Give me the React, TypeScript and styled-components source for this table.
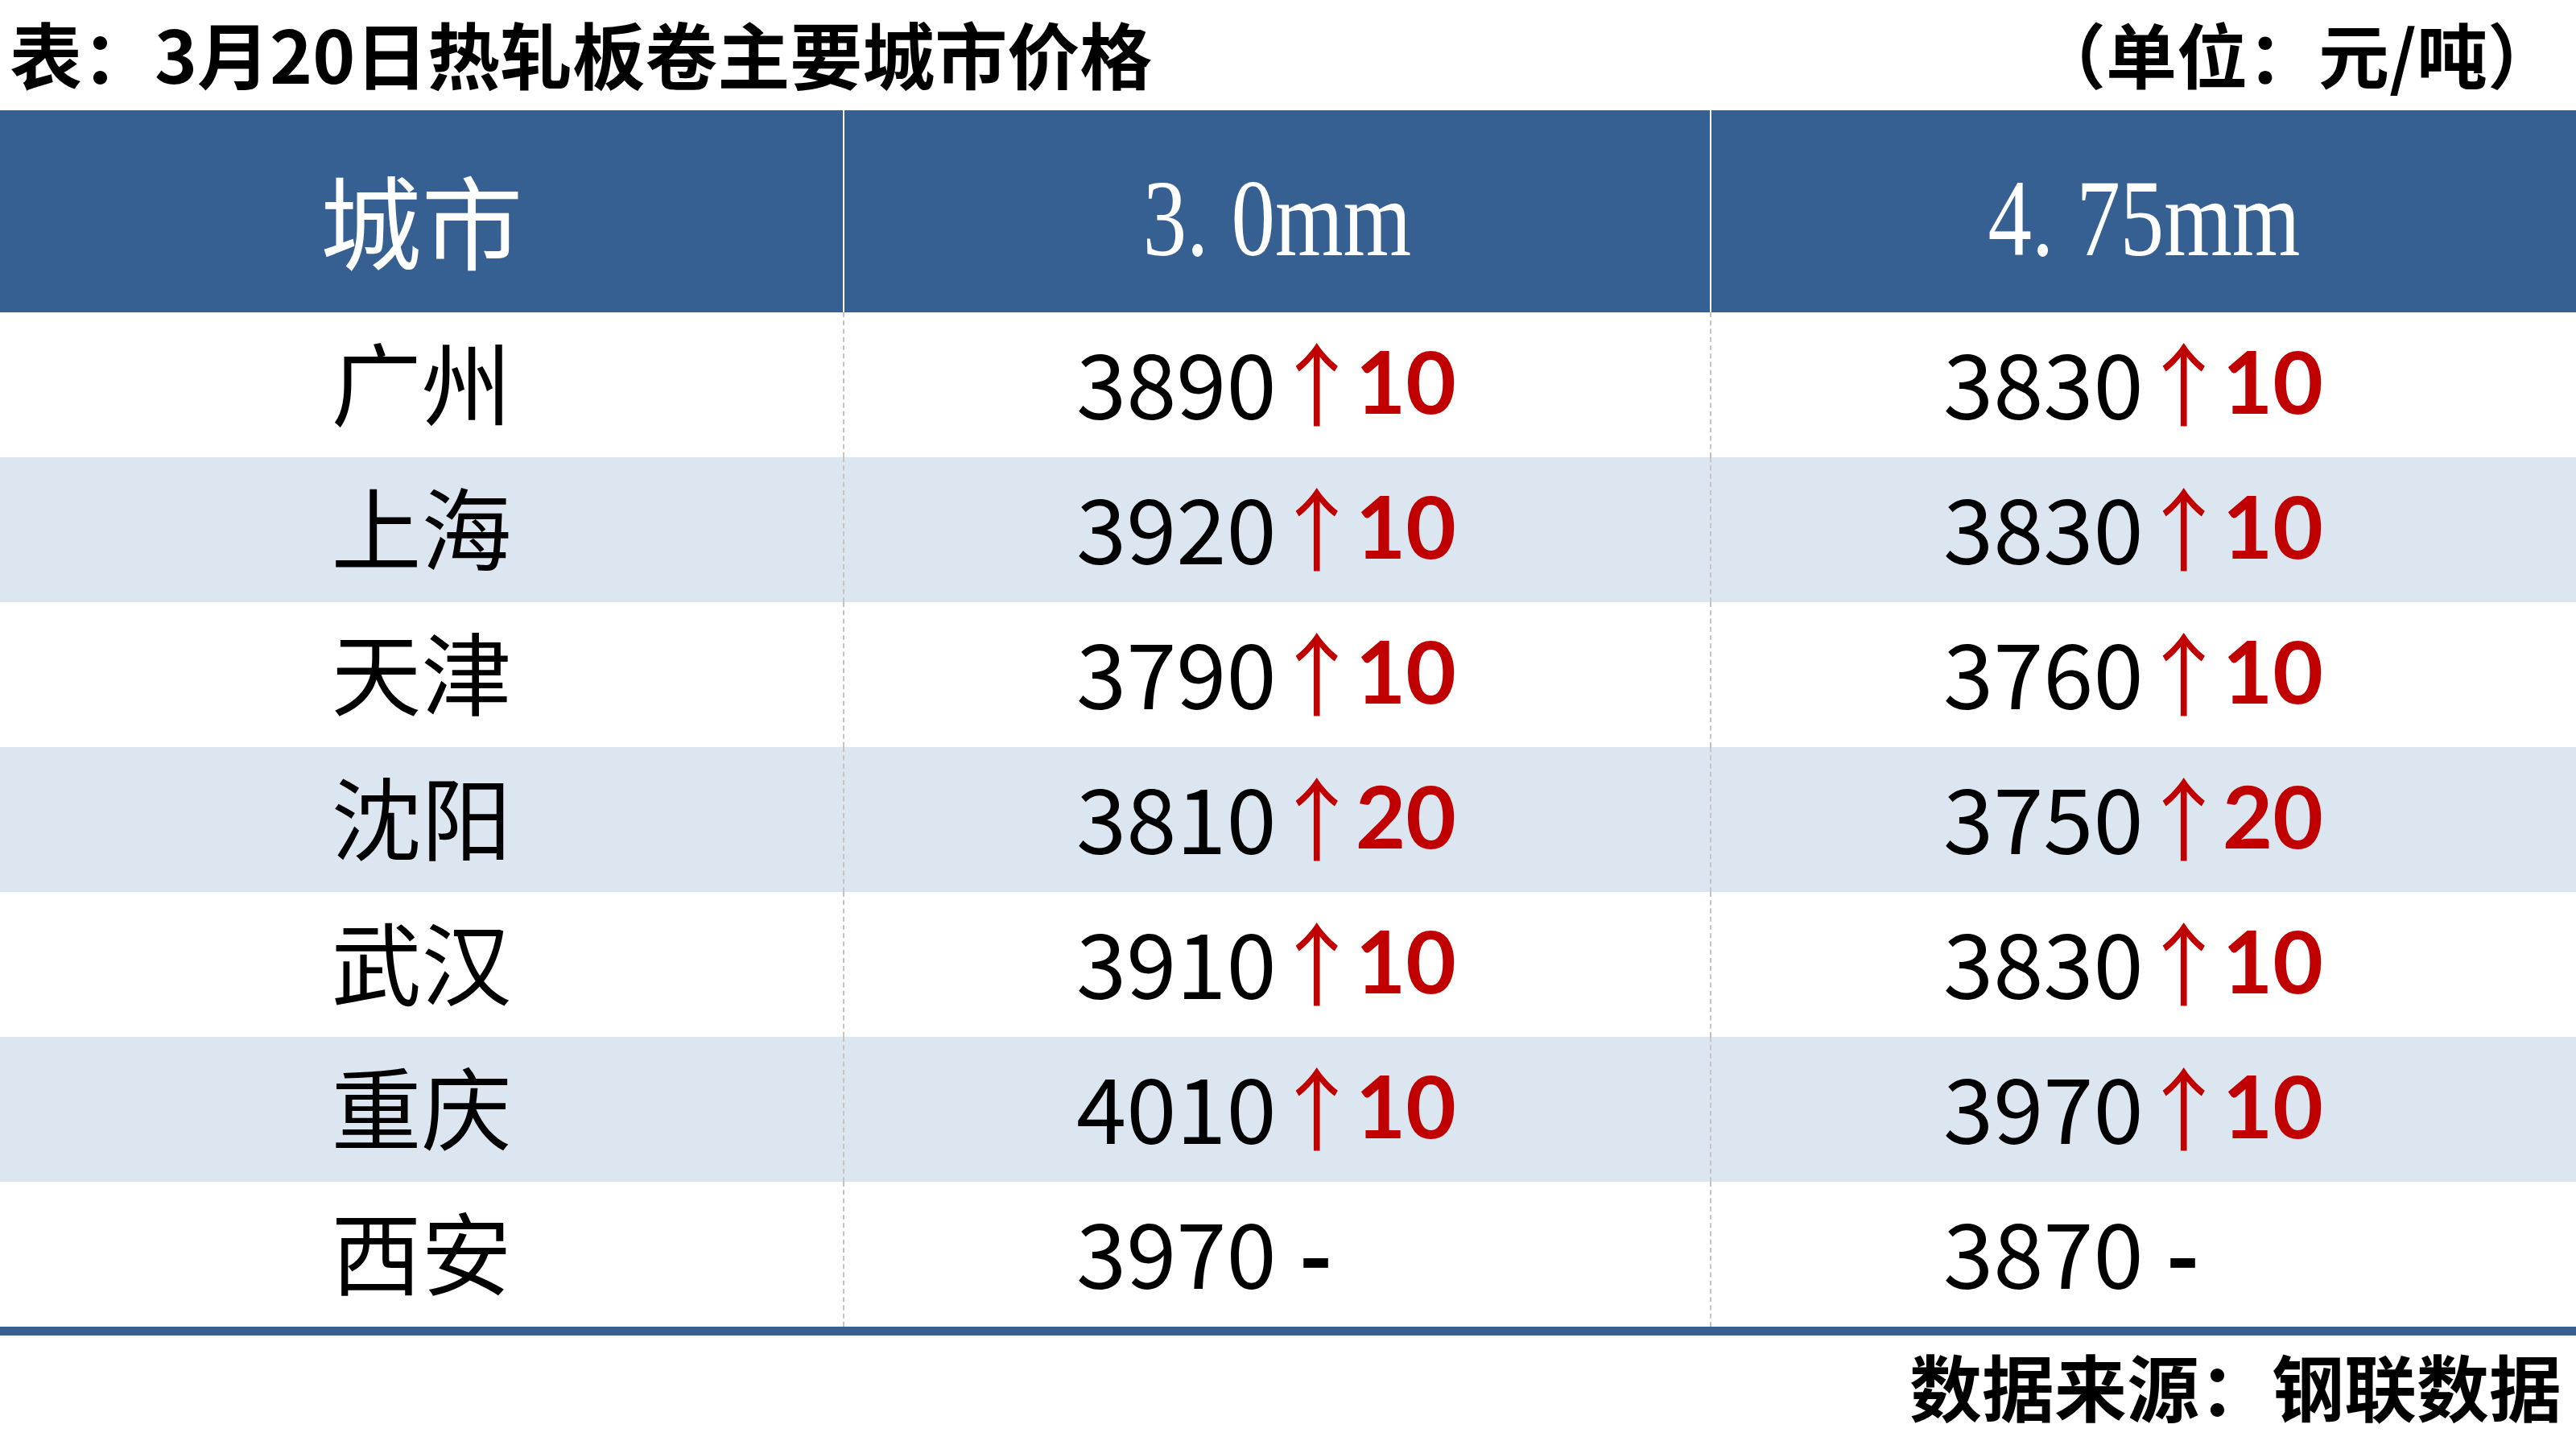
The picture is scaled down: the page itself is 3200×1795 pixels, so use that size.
import styled, { createGlobalStyle } from 'styled-components'

const GlobalStyle = createGlobalStyle`
  html, body {
    margin: 0;
    padding: 0;
    background: #ffffff;
  }
  body {
    font-family: "Noto Sans CJK SC", "Noto Sans", sans-serif;
  }
`

const Page = styled.div`
  width: 3200px;
  height: 1795px;
  display: flex;
  flex-direction: column;
  background: #ffffff;
  overflow: hidden;
`

const TitleBar = styled.div`
  height: 137px;
  box-sizing: border-box;
  padding: 0 22px 8px 12px;
  display: flex;
  justify-content: space-between;
  align-items: center;
  font-weight: 700;
  line-height: 1;
  color: #000000;
`

const Title = styled.span<{ $size: number }>`
  font-size: ${({ $size }) => $size}px;
`

const Table = styled.div`
  display: grid;
  grid-template-columns: 1047px 1077px 1fr;
  border-bottom: 11px solid #376092;
`

const HeadCell = styled.div<{ $first?: boolean }>`
  height: 251px;
  box-sizing: border-box;
  padding-top: 16px;
  background: #376092;
  color: #ffffff;
  display: flex;
  align-items: center;
  justify-content: center;
  border-left: ${({ $first }) => ($first ? 'none' : '2px solid #ffffff')};
  overflow: hidden;
`

const HeadCity = styled.span`
  font-size: 126px;
  font-weight: 400;
  line-height: 1;
`

const HeadSize = styled.span`
  display: inline-block;
  font-family: "Liberation Serif", "DejaVu Serif", serif;
  font-size: 136px;
  line-height: 1;
  transform: scaleX(0.8);
`

const Dot = styled.span`
  padding-right: 0.26em;
`

const Cell = styled.div<{ $shade: boolean; $first?: boolean }>`
  height: 180px;
  box-sizing: border-box;
  padding-bottom: 12px;
  background: ${({ $shade }) => ($shade ? '#dce6f1' : '#ffffff')};
  display: flex;
  align-items: center;
  justify-content: ${({ $first }) => ($first ? 'center' : 'flex-start')};
  padding-left: ${({ $first }) => ($first ? '0' : '288px')};
  border-left: ${({ $first }) => ($first ? 'none' : '2px dashed #c4c4c4')};
  font-size: 112px;
  line-height: 1;
  color: #000000;
  white-space: nowrap;
`

const City = styled.span`
  font-weight: 400;
`

const Arrow = styled.span`
  color: #c00000;
  font-weight: 400;
  vertical-align: 0.08em;
  margin: 0 -8px 0 -6px;
`

const Change = styled.span`
  color: #c00000;
  font-family: "Lato", "Noto Sans CJK SC", sans-serif;
  font-size: 108px;
  font-weight: 700;
`

const Dash = styled.span`
  font-weight: 700;
  margin-left: 0.25em;
`

const Footer = styled.div`
  flex: 1;
  box-sizing: border-box;
  padding: 0 18px 14px 0;
  display: flex;
  justify-content: flex-end;
  align-items: center;
  font-size: 90px;
  font-weight: 700;
  line-height: 1;
  color: #000000;
`

type Row = {
  city: string
  thin: string
  thinChange?: string
  thick: string
  thickChange?: string
}

const rows: Row[] = [
  { city: '广州', thin: '3890', thinChange: '10', thick: '3830', thickChange: '10' },
  { city: '上海', thin: '3920', thinChange: '10', thick: '3830', thickChange: '10' },
  { city: '天津', thin: '3790', thinChange: '10', thick: '3760', thickChange: '10' },
  { city: '沈阳', thin: '3810', thinChange: '20', thick: '3750', thickChange: '20' },
  { city: '武汉', thin: '3910', thinChange: '10', thick: '3830', thickChange: '10' },
  { city: '重庆', thin: '4010', thinChange: '10', thick: '3970', thickChange: '10' },
  { city: '西安', thin: '3970', thick: '3870' },
]

function Price({ value, change }: { value: string; change?: string }) {
  return (
    <>
      {value}
      {change ? (
        <>
          <Arrow>↑</Arrow>
          <Change>{change}</Change>
        </>
      ) : (
        <Dash>-</Dash>
      )}
    </>
  )
}

export default function App() {
  return (
    <Page>
      <GlobalStyle />
      <TitleBar>
        <Title $size={90}>表：3月20日热轧板卷主要城市价格</Title>
        <Title $size={88}>（单位：元/吨）</Title>
      </TitleBar>
      <Table>
        <HeadCell $first>
          <HeadCity>城市</HeadCity>
        </HeadCell>
        <HeadCell>
          <HeadSize>3<Dot>.</Dot>0mm</HeadSize>
        </HeadCell>
        <HeadCell>
          <HeadSize>4<Dot>.</Dot>75mm</HeadSize>
        </HeadCell>
        {rows.map((r, i) => {
          const shade = i % 2 === 1
          return [
            <Cell key={`${r.city}-c`} $shade={shade} $first>
              <City>{r.city}</City>
            </Cell>,
            <Cell key={`${r.city}-a`} $shade={shade}>
              <Price value={r.thin} change={r.thinChange} />
            </Cell>,
            <Cell key={`${r.city}-b`} $shade={shade}>
              <Price value={r.thick} change={r.thickChange} />
            </Cell>,
          ]
        })}
      </Table>
      <Footer>数据来源：钢联数据</Footer>
    </Page>
  )
}
